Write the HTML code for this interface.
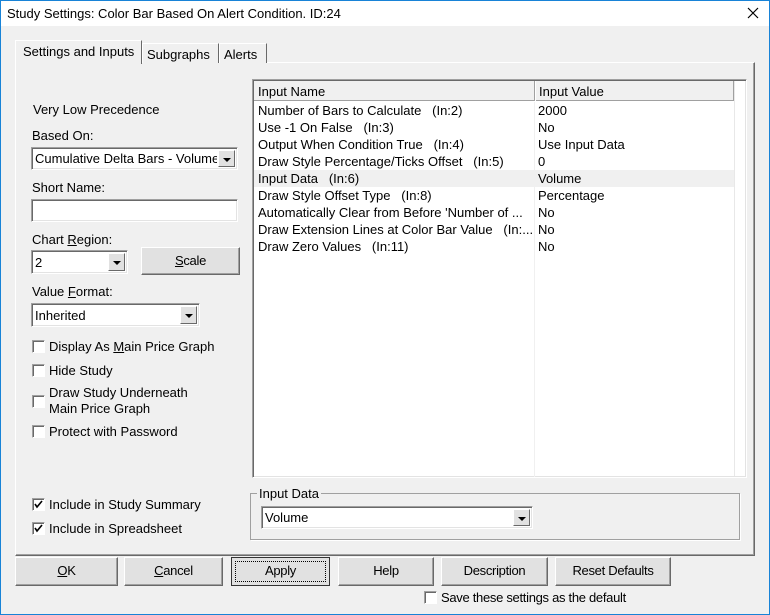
<!DOCTYPE html>
<html><head><style>
*{box-sizing:border-box;margin:0;padding:0}
body{width:770px;height:615px;background:#f0f0f0;font-family:"Liberation Sans",Arial,sans-serif;font-size:13px;color:#000;position:relative;overflow:hidden}
.a{position:absolute;white-space:nowrap}
.win{position:absolute;left:0;top:0;width:770px;height:615px;border:1px solid #1883d7}
.title{position:absolute;left:1px;top:1px;width:768px;height:25px;background:#fff}
.sunk{position:absolute;background:#fff;border-top:1px solid #a0a0a0;border-left:1px solid #a0a0a0;border-right:1px solid #fff;border-bottom:1px solid #fff;box-shadow:inset 1px 1px 0 #696969, inset -1px -1px 0 #e3e3e3}
.btn{position:absolute;background:#e1e1e1;border:1px solid #fff;border-right-color:#696969;border-bottom-color:#696969;box-shadow:inset -1px -1px 0 #a0a0a0;text-align:center;font-size:13px;letter-spacing:-0.3px}
.dd{position:absolute;top:2px;right:2px;width:17px;bottom:2px;background:#e1e1e1;border:1px solid #fff;border-right-color:#696969;border-bottom-color:#696969}
.dd:after{content:"";position:absolute;left:4px;top:7px;border-left:4px solid transparent;border-right:4px solid transparent;border-top:4px solid #000}
.cb{position:absolute;width:13px;height:13px;background:#fff;border:1px solid #a0a0a0;border-right-color:#fff;border-bottom-color:#fff;box-shadow:inset 1px 1px 0 #696969}
.tab{position:absolute;background:#f0f0f0;border:1px solid #fff;border-bottom:none;border-right-color:#696969;padding:0 4px}
.row{position:absolute;left:5px;height:17px;width:476px}
.row span{position:absolute;top:1px}
</style></head><body>
<div class="win"></div>
<div class="title"></div>
<div class="a" style="left:7px;top:6px;font-size:13px">Study Settings: Color Bar Based On Alert Condition. ID:24</div>
<svg class="a" style="left:747px;top:7px" width="12" height="12"><path d="M1 1L11 11M11 1L1 11" stroke="#000" stroke-width="1.2"/></svg>

<div class="a" style="left:15px;top:62px;width:740px;height:494px;border:1px solid #fff;border-right-color:#696969;border-bottom-color:#696969;box-shadow:inset -1px -1px 0 #a0a0a0"></div>
<div class="tab" style="left:142px;top:43px;width:77px;height:20px;"><span class="a" style="left:4px;top:3px">Subgraphs</span></div>
<div class="tab" style="left:219px;top:43px;width:48px;height:20px;"><span class="a" style="left:4px;top:3px">Alerts</span></div>
<div class="tab" style="left:15px;top:40px;width:127px;height:24px;border-right:1px solid #696969;z-index:2"><span class="a" style="left:7px;top:3px">Settings and Inputs</span></div>

<div class="a" style="left:33px;top:102px">Very Low Precedence</div>
<div class="a" style="left:32px;top:128px">Based On:</div>
<div class="sunk" style="left:31px;top:147px;width:207px;height:23px"><span class="a" style="left:3px;top:3px;width:182px;overflow:hidden">Cumulative Delta Bars - Volume</span><div class="dd"></div></div>
<div class="a" style="left:32px;top:180px">Short Name:</div>
<div class="sunk" style="left:31px;top:199px;width:207px;height:23px"></div>
<div class="a" style="left:32px;top:232px">Chart <u>R</u>egion:</div>
<div class="sunk" style="left:31px;top:250px;width:97px;height:24px"><span class="a" style="left:3px;top:4px">2</span><div class="dd"></div></div>
<div class="btn" style="left:141px;top:247px;width:99px;height:28px;line-height:25px"><u>S</u>cale</div>
<div class="a" style="left:32px;top:284px">Value <u>F</u>ormat:</div>
<div class="sunk" style="left:31px;top:303px;width:169px;height:24px"><span class="a" style="left:3px;top:4px">Inherited</span><div class="dd"></div></div>
<div class="cb" style="left:32px;top:340px"></div><div class="a" style="left:49px;top:339px">Display As <u>M</u>ain Price Graph</div>
<div class="cb" style="left:32px;top:364px"></div><div class="a" style="left:49px;top:363px">Hide Study</div>
<div class="cb" style="left:32px;top:395px"></div><div class="a" style="left:49px;top:385px;line-height:16px">Draw Study Underneath<br>Main Price Graph</div>
<div class="cb" style="left:32px;top:425px"></div><div class="a" style="left:49px;top:424px">Protect with Password</div>
<div class="cb" style="left:32px;top:498px"></div><svg class="a" style="left:34px;top:500px" width="9" height="9"><path d="M1 4L3 7L8 1" stroke="#000" stroke-width="1.6" fill="none"/></svg><div class="a" style="left:49px;top:497px">Include in Study Summary</div>
<div class="cb" style="left:32px;top:522px"></div><svg class="a" style="left:34px;top:524px" width="9" height="9"><path d="M1 4L3 7L8 1" stroke="#000" stroke-width="1.6" fill="none"/></svg><div class="a" style="left:49px;top:521px">Include in Spreadsheet</div>

<div class="sunk" style="left:252px;top:79px;width:495px;height:399px">
  <div class="a" style="left:1px;top:1px;width:480px;height:20px;background:#f0f0f0;border-bottom:1px solid #a0a0a0"></div>
  <div class="a" style="left:281px;top:1px;width:1px;height:20px;background:#a0a0a0"></div>
  <div class="a" style="left:282px;top:1px;width:1px;height:20px;background:#fff"></div>
  <div class="a" style="left:480px;top:1px;width:1px;height:20px;background:#a0a0a0"></div>
  <div class="a" style="left:481px;top:1px;width:1px;height:395px;background:#e8e8e8"></div>
  <div class="a" style="left:5px;top:4px">Input Name</div>
  <div class="a" style="left:286px;top:4px">Input Value</div>
  <div class="a" style="left:281px;top:22px;width:1px;height:375px;background:#f0f0f0"></div>
  <div class="row" style="top:22px"><span>Number of Bars to Calculate &nbsp;&nbsp;(In:2)</span><span style="left:280px">2000</span></div>
  <div class="row" style="top:39px"><span>Use -1 On False &nbsp;&nbsp;(In:3)</span><span style="left:280px">No</span></div>
  <div class="row" style="top:56px"><span>Output When Condition True &nbsp;&nbsp;(In:4)</span><span style="left:280px">Use Input Data</span></div>
  <div class="row" style="top:73px"><span>Draw Style Percentage/Ticks Offset &nbsp;&nbsp;(In:5)</span><span style="left:280px">0</span></div>
  <div class="row" style="top:90px;background:#f0f0f0;left:1px;width:480px"><span style="left:4px">Input Data &nbsp;&nbsp;(In:6)</span><span style="left:284px">Volume</span></div>
  <div class="row" style="top:107px"><span>Draw Style Offset Type &nbsp;&nbsp;(In:8)</span><span style="left:280px">Percentage</span></div>
  <div class="row" style="top:124px"><span>Automatically Clear from Before 'Number of ...</span><span style="left:280px">No</span></div>
  <div class="row" style="top:141px"><span>Draw Extension Lines at Color Bar Value &nbsp;&nbsp;(In:...</span><span style="left:280px">No</span></div>
  <div class="row" style="top:158px"><span>Draw Zero Values &nbsp;&nbsp;(In:11)</span><span style="left:280px">No</span></div>
</div>

<div class="a" style="left:250px;top:493px;width:490px;height:47px;border:1px solid #a0a0a0;box-shadow:1px 1px 0 #fff"></div>
<div class="a" style="left:257px;top:486px;background:#f0f0f0;padding:0 2px">Input Data</div>
<div class="sunk" style="left:261px;top:506px;width:272px;height:23px"><span class="a" style="left:3px;top:3px">Volume</span><div class="dd"></div></div>

<div class="btn" style="left:15px;top:557px;width:103px;height:29px;line-height:26px"><u>O</u>K</div>
<div class="btn" style="left:124px;top:557px;width:99px;height:29px;line-height:26px"><u>C</u>ancel</div>
<div class="btn" style="left:231px;top:557px;width:99px;height:29px;line-height:25px;border:1px solid #333;box-shadow:none"><div class="a" style="left:3px;top:3px;right:3px;bottom:3px;border:1px dotted #000"></div>Apply</div>
<div class="btn" style="left:338px;top:557px;width:96px;height:29px;line-height:26px">Help</div>
<div class="btn" style="left:441px;top:557px;width:107px;height:29px;line-height:26px">Description</div>
<div class="btn" style="left:555px;top:557px;width:116px;height:29px;line-height:26px">Reset Defaults</div>
<div class="cb" style="left:424px;top:591px"></div><div class="a" style="left:441px;top:590px;letter-spacing:-0.3px">Save these settings as the default</div>
</body></html>
